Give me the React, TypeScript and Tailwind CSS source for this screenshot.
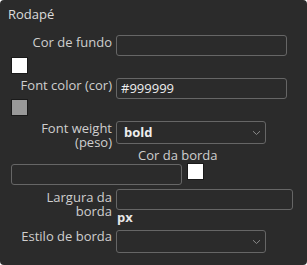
import React from 'react';

function Chevron() {
    return (
        <svg width="9" height="6" viewBox="0 0 9 6" className="absolute right-[4px] top-1/2 -translate-y-1/2">
            <path d="M1 1.2 L4.5 4.5 L8 1.2" fill="none" stroke="#8a8a8a" strokeWidth="1" />
        </svg>
    );
}

function Swatch({ color }: { color: string }) {
    return <div className="w-[17px] h-[17px] border border-[#1a1a1a]" style={{ background: color }} />;
}

export default function App() {
    const label = 'w-[101px] text-right text-[#cfcfcf] leading-[14px] shrink-0';
    const input = 'h-[21px] rounded-[3px] border border-[#666] bg-[#2b2b2b] px-[4px] text-[#eee] text-[13px] leading-[19px]';

    return (
        <div className="w-[307px] h-[265px] bg-white">
            <div
                className="w-[307px] h-[265px] bg-[#2b2b2b] rounded-[4px] text-[13px] overflow-hidden"
                style={{ fontFamily: '"Open Sans", "Noto Sans", sans-serif' }}
            >
                <div className="pt-[5px] pl-[8px] text-[#dcdcdc] leading-[18px]">Rodapé</div>

                <div className="pl-[11px]">
                    <div className="mt-[12px] flex items-start">
                        <div className={label}>Cor de fundo</div>
                        <div className={`${input} ml-[4px] w-[171px]`}></div>
                    </div>
                    <div className="mt-[1px]">
                        <Swatch color="#ffffff" />
                    </div>

                    <div className="mt-[4px] flex items-start">
                        <div className={label}>Font color (cor)</div>
                        <div className={`${input} ml-[4px] w-[171px]`}>#999999</div>
                    </div>
                    <Swatch color="#999999" />

                    <div className="mt-[5px] flex items-start">
                        <div className={label}>
                            Font weight
                            <br />
                            (peso)
                        </div>
                        <div className={`${input} relative ml-[4px] w-[150px] h-[23px] pl-[7px] font-bold leading-[21px]`}>
                            bold
                            <Chevron />
                        </div>
                    </div>

                    <div className="-mt-[1px] pl-[127px] text-[#cfcfcf] leading-[14px]">Cor da borda</div>
                    <div className="mt-[2px] flex items-start gap-[5px]">
                        <div className={`${input} w-[171px]`}></div>
                        <div className="-mt-[1px]">
                            <Swatch color="#ffffff" />
                        </div>
                    </div>

                    <div className="mt-[4px] flex items-start">
                        <div className={`${label} pt-[1px]`}>
                            Largura da
                            <br />
                            borda
                        </div>
                        <div className="ml-[4px]">
                            <div className={`${input} w-[177px] h-[20px]`}></div>
                            <div className="pl-[1px] text-[#e6e6e6] font-bold leading-[14px]">px</div>
                        </div>
                    </div>

                    <div className="mt-[6px] flex items-start">
                        <div className={`${label} -mt-[1px]`}>Estilo de borda</div>
                        <div className={`${input} relative ml-[4px] w-[150px] h-[23px]`}>
                            <Chevron />
                        </div>
                    </div>
                </div>
            </div>
        </div>
    );
}
